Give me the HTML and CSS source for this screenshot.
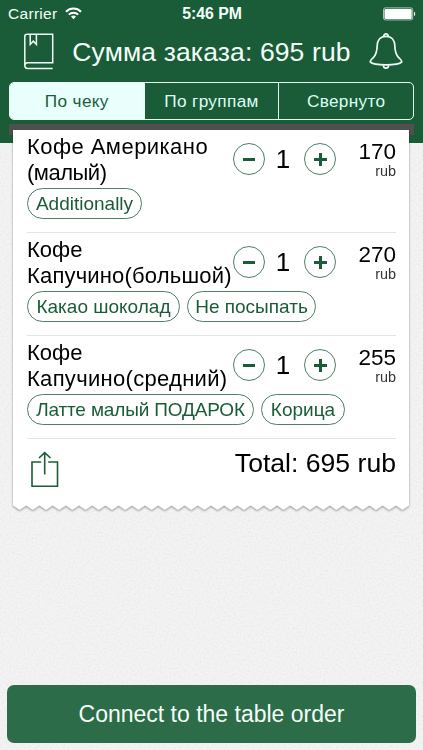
FILE: index.html
```html
<!DOCTYPE html>
<html lang="ru">

<head>
    <meta charset="UTF-8">
    <meta name="viewport" content="width=device-width, initial-scale=1.0">
    <title>Сумма заказа</title>
    <link rel="stylesheet" href="styles.css">
</head>

<body>
    <header class="header">
        <div class="statusbar">
            <div class="carrier">
                <span class="carrier-name">Carrier</span>
                <svg width="17" height="13" viewBox="0 0 17 13" fill="none" stroke="#fff" stroke-width="2">
                    <path d="M1 4.7a10.6 10.6 0 0 1 15 0" />
                    <path d="M3.8 7.6a6.6 6.6 0 0 1 9.4 0" />
                    <path d="M8.5 12.2L6 9.6a3.6 3.6 0 0 1 5 0z" fill="#fff" stroke="none" />
                </svg>
            </div>
            <span class="time">5:46 PM</span>
            <div class="battery">
                <svg width="33" height="14" viewBox="0 0 33 14">
                    <rect x=".5" y=".9" width="29.2" height="12" rx="1.8" fill="none" stroke="#a9c6b6" />
                    <rect x="1.5" y="1.9" width="27.2" height="10" rx="1" fill="#fff" />
                    <path d="M31 4.7c1.6.6 1.6 3.8 0 4.4z" fill="#fff" />
                </svg>
            </div>
        </div>
        <div class="titlebar">
            <svg class="book" width="30" height="37" viewBox="0 0 30 37" fill="none" stroke="#f0fff8" stroke-width="1.5">
                <path d="M28.700 35.500H3.600A2.900 2.900 0 0 1 .8 32.600V3.200C.8 1.800 1.700 1.200 3.200 1.200H28.700V29.800H3.600A2.800 2.800 0 0 0 .8 32.600" />
                <path d="M6.200 1.200v10.200l3.100-3.200 3.100 3.200V1.200" />
            </svg>
            <h1 class="title">Сумма заказа: 695 rub</h1>
            <svg class="bell" width="34" height="37" viewBox="0 0 34 37" fill="none" stroke="#f0fff8" stroke-width="1.7" stroke-linejoin="round">
                <path d="M17 3.3C11.200 3.300 8.300 7.500 8.200 12.500C8.100 18.500 7.300 21.500 4.500 24.300C2.500 26.300 1.200 27.200 1.200 28.900C5 32.800 29 32.800 32.800 28.900C32.800 27.200 31.500 26.300 29.500 24.300C26.700 21.500 25.900 18.500 25.800 12.500C25.700 7.500 22.800 3.300 17 3.300Z" />
                <path d="M14.800 3.300C14.500 .1 19.500 .1 19.200 3.300M14.300 32.200C14.500 36 19.500 36 19.700 32.200" />
            </svg>
        </div>
        <nav class="tabs">
            <button class="tab active">По чеку</button>
            <button class="tab">По группам</button>
            <button class="tab">Свернуто</button>
        </nav>
    </header>

    <main class="content">
        <div class="slot"></div>
        <section class="receipt">
            <div class="paper">
                <article class="item">
                    <div class="item-top">
                        <div class="name"><span class="n1">Кофе Американо</span><br><span class="n4">(малый)</span></div>
                        <div class="counter">
                            <button class="round minus"></button>
                            <span class="qty">1</span>
                            <button class="round plus"></button>
                        </div>
                        <div class="price">170<small>rub</small></div>
                    </div>
                    <div class="tags"><span class="tag t1">Additionally</span></div>
                </article>
                <article class="item">
                    <div class="item-top">
                        <div class="name">Кофе<br><span class="n2">Капучино(большой)</span></div>
                        <div class="counter">
                            <button class="round minus"></button>
                            <span class="qty">1</span>
                            <button class="round plus"></button>
                        </div>
                        <div class="price">270<small>rub</small></div>
                    </div>
                    <div class="tags"><span class="tag t2">Какао шоколад</span><span class="tag t3">Не посыпать</span></div>
                </article>
                <article class="item">
                    <div class="item-top">
                        <div class="name">Кофе<br><span class="n3">Капучино(средний)</span></div>
                        <div class="counter">
                            <button class="round minus"></button>
                            <span class="qty">1</span>
                            <button class="round plus"></button>
                        </div>
                        <div class="price">255<small>rub</small></div>
                    </div>
                    <div class="tags"><span class="tag t4">Латте малый ПОДАРОК</span><span class="tag t5">Корица</span></div>
                </article>
                <div class="summary">
                    <svg class="share" width="28" height="37" viewBox="0 0 28 37" fill="none" stroke="#1c5c38" stroke-width="1.6">
                        <path d="M10.200 11H1V35.300H26.500V11H17.200M13.700 23.500V1.800M8 7l5.700-5.400L19.500 7" />
                    </svg>
                    <span class="total">Total: 695 rub</span>
                </div>
            </div>
            <svg class="teeth" width="396" height="6">
                <defs>
                    <pattern id="tooth" width="13.2" height="6" patternUnits="userSpaceOnUse">
                        <path d="M0 0H13.200V.5L6.600 5 0 .5z" fill="#fff" />
                    </pattern>
                </defs>
                <rect width="396" height="6" fill="url(#tooth)" />
            </svg>
        </section>
    </main>

    <footer class="footer">
        <button class="connect">Connect to the table order</button>
    </footer>
</body>

</html>
```

FILE: styles.css
```css
* {
    box-sizing: border-box;
}

body {
    margin: 0;
    height: 750px;
    display: flex;
    flex-direction: column;
    overflow: hidden;
    font-family: "Liberation Sans", Arial, sans-serif;
    color: #000;
    background-color: #f3f3f3;
    /* fine paper grain */
    background-image: url("data:image/svg+xml,%3Csvg xmlns='http://www.w3.org/2000/svg' width='150' height='150'%3E%3Cfilter id='n'%3E%3CfeTurbulence type='fractalNoise' baseFrequency='.5' numOctaves='2' stitchTiles='stitch'/%3E%3CfeColorMatrix values='0 0 0 0 .5 0 0 0 0 .5 0 0 0 0 .5 .8 0 0 0 -.34'/%3E%3C/filter%3E%3Crect width='150' height='150' filter='url(%23n)' opacity='.5'/%3E%3C/svg%3E");
}

button {
    font-family: inherit;
    padding: 0;
    border: none;
    background: none;
}

svg {
    display: block;
}

.header {
    height: 143px;
    flex: none;
    background: #1a5c38;
    color: #f4fffa;
}

.statusbar {
    height: 28px;
    display: grid;
    grid-template-columns: 1fr auto 1fr;
    align-items: center;
    padding: 0 7px 0 8px;
    font-size: 15.5px;
}

.carrier {
    display: flex;
    gap: 8px;
}

.carrier-name {
    letter-spacing: 0.3px;
    line-height: 14px;
}

.time {
    font-weight: bold;
    font-size: 15.8px;
}

.battery {
    display: flex;
    justify-content: flex-end;
}

.titlebar {
    height: 54px;
    display: flex;
    align-items: flex-start;
    justify-content: space-between;
    padding: 5px 20px 0 24px;
}

.title {
    margin: 4px 0 0;
    font-size: 26.5px;
    font-weight: normal;
    line-height: 30px;
    letter-spacing: 0.13px;
    white-space: nowrap;
}

.tabs {
    height: 38px;
    margin: 0 9px;
    display: flex;
    border: 1px solid #e6fff8;
    border-radius: 5px;
    overflow: hidden;
}

.tab {
    flex: 1;
    color: #dcfff2;
    font-size: 17.2px;
    letter-spacing: 0.35px;
    border-left: 1px solid #e6fff8;
}

.tab:first-child {
    border-left: none;
}

.tab.active {
    background: #e9fffb;
    color: #1a5c38;
}

.content {
    flex: 1;
    margin-top: -19px;
    padding: 0 9px;
}

.slot {
    height: 11px;
    background: #505050;
}

.receipt {
    margin: -5px 4px 0;
    width: 396px;
    filter: drop-shadow(0 1px 1px rgba(0, 0, 0, 0.4));
}

.paper {
    height: 375px;
    padding: 0 13px 0 14px;
    background: #fff;
}

.item {
    height: 103px;
    border-bottom: 1px solid #e4e4e4;
}

.item-top {
    height: 58px;
    display: flex;
    padding-top: 4px;
}

.name {
    width: 206px;
    font-size: 22px;
    line-height: 26px;
    white-space: nowrap;
}

.n1 { letter-spacing: 0.45px; }
.n2 { letter-spacing: 0.18px; }
.n3 { letter-spacing: 0.3px; }
.n4 { letter-spacing: -0.5px; }

.counter {
    display: flex;
    align-items: center;
    height: 32px;
    margin-top: 9px;
}

.round {
    width: 32px;
    height: 32px;
    border: 1px solid #4d8065;
    border-radius: 50%;
    background-repeat: no-repeat;
    background-position: center;
}

.minus {
    background-image: linear-gradient(#1a5c38, #1a5c38);
    background-size: 12px 3px;
}

.plus {
    background-image: linear-gradient(#1a5c38, #1a5c38), linear-gradient(#1a5c38, #1a5c38);
    background-size: 13px 3px, 3px 13px;
}

.qty {
    width: 39px;
    padding-right: 3px;
    font-size: 26px;
    line-height: 32px;
    text-align: center;
}

.price {
    flex: 1;
    margin-top: 6px;
    font-size: 22.5px;
    line-height: 24px;
    text-align: right;
}

.price small {
    display: block;
    font-size: 14.4px;
    line-height: 14px;
    color: #333;
}

.tags {
    display: flex;
    gap: 7px;
}

.tag {
    height: 31px;
    border: 1px solid #4d8065;
    border-radius: 16px;
    color: #1a5c38;
    font-size: 19px;
    line-height: 29px;
    text-align: center;
    white-space: nowrap;
}

.t1 { width: 115px; }
.t2 { width: 153px; }
.t3 { width: 129px; }
.t4 { width: 227px; letter-spacing: -0.15px; }
.t5 { width: 84px; }

.summary {
    display: flex;
    justify-content: space-between;
    padding: 12px 0 0 4px;
}

.total {
    font-size: 26.6px;
    line-height: 25px;
}

.footer {
    padding: 0 7px 7px;
}

.connect {
    width: 409px;
    height: 58px;
    display: block;
    border-radius: 7px;
    background: #2d6c48;
    color: #f4fffa;
    font-size: 23px;
}
```
